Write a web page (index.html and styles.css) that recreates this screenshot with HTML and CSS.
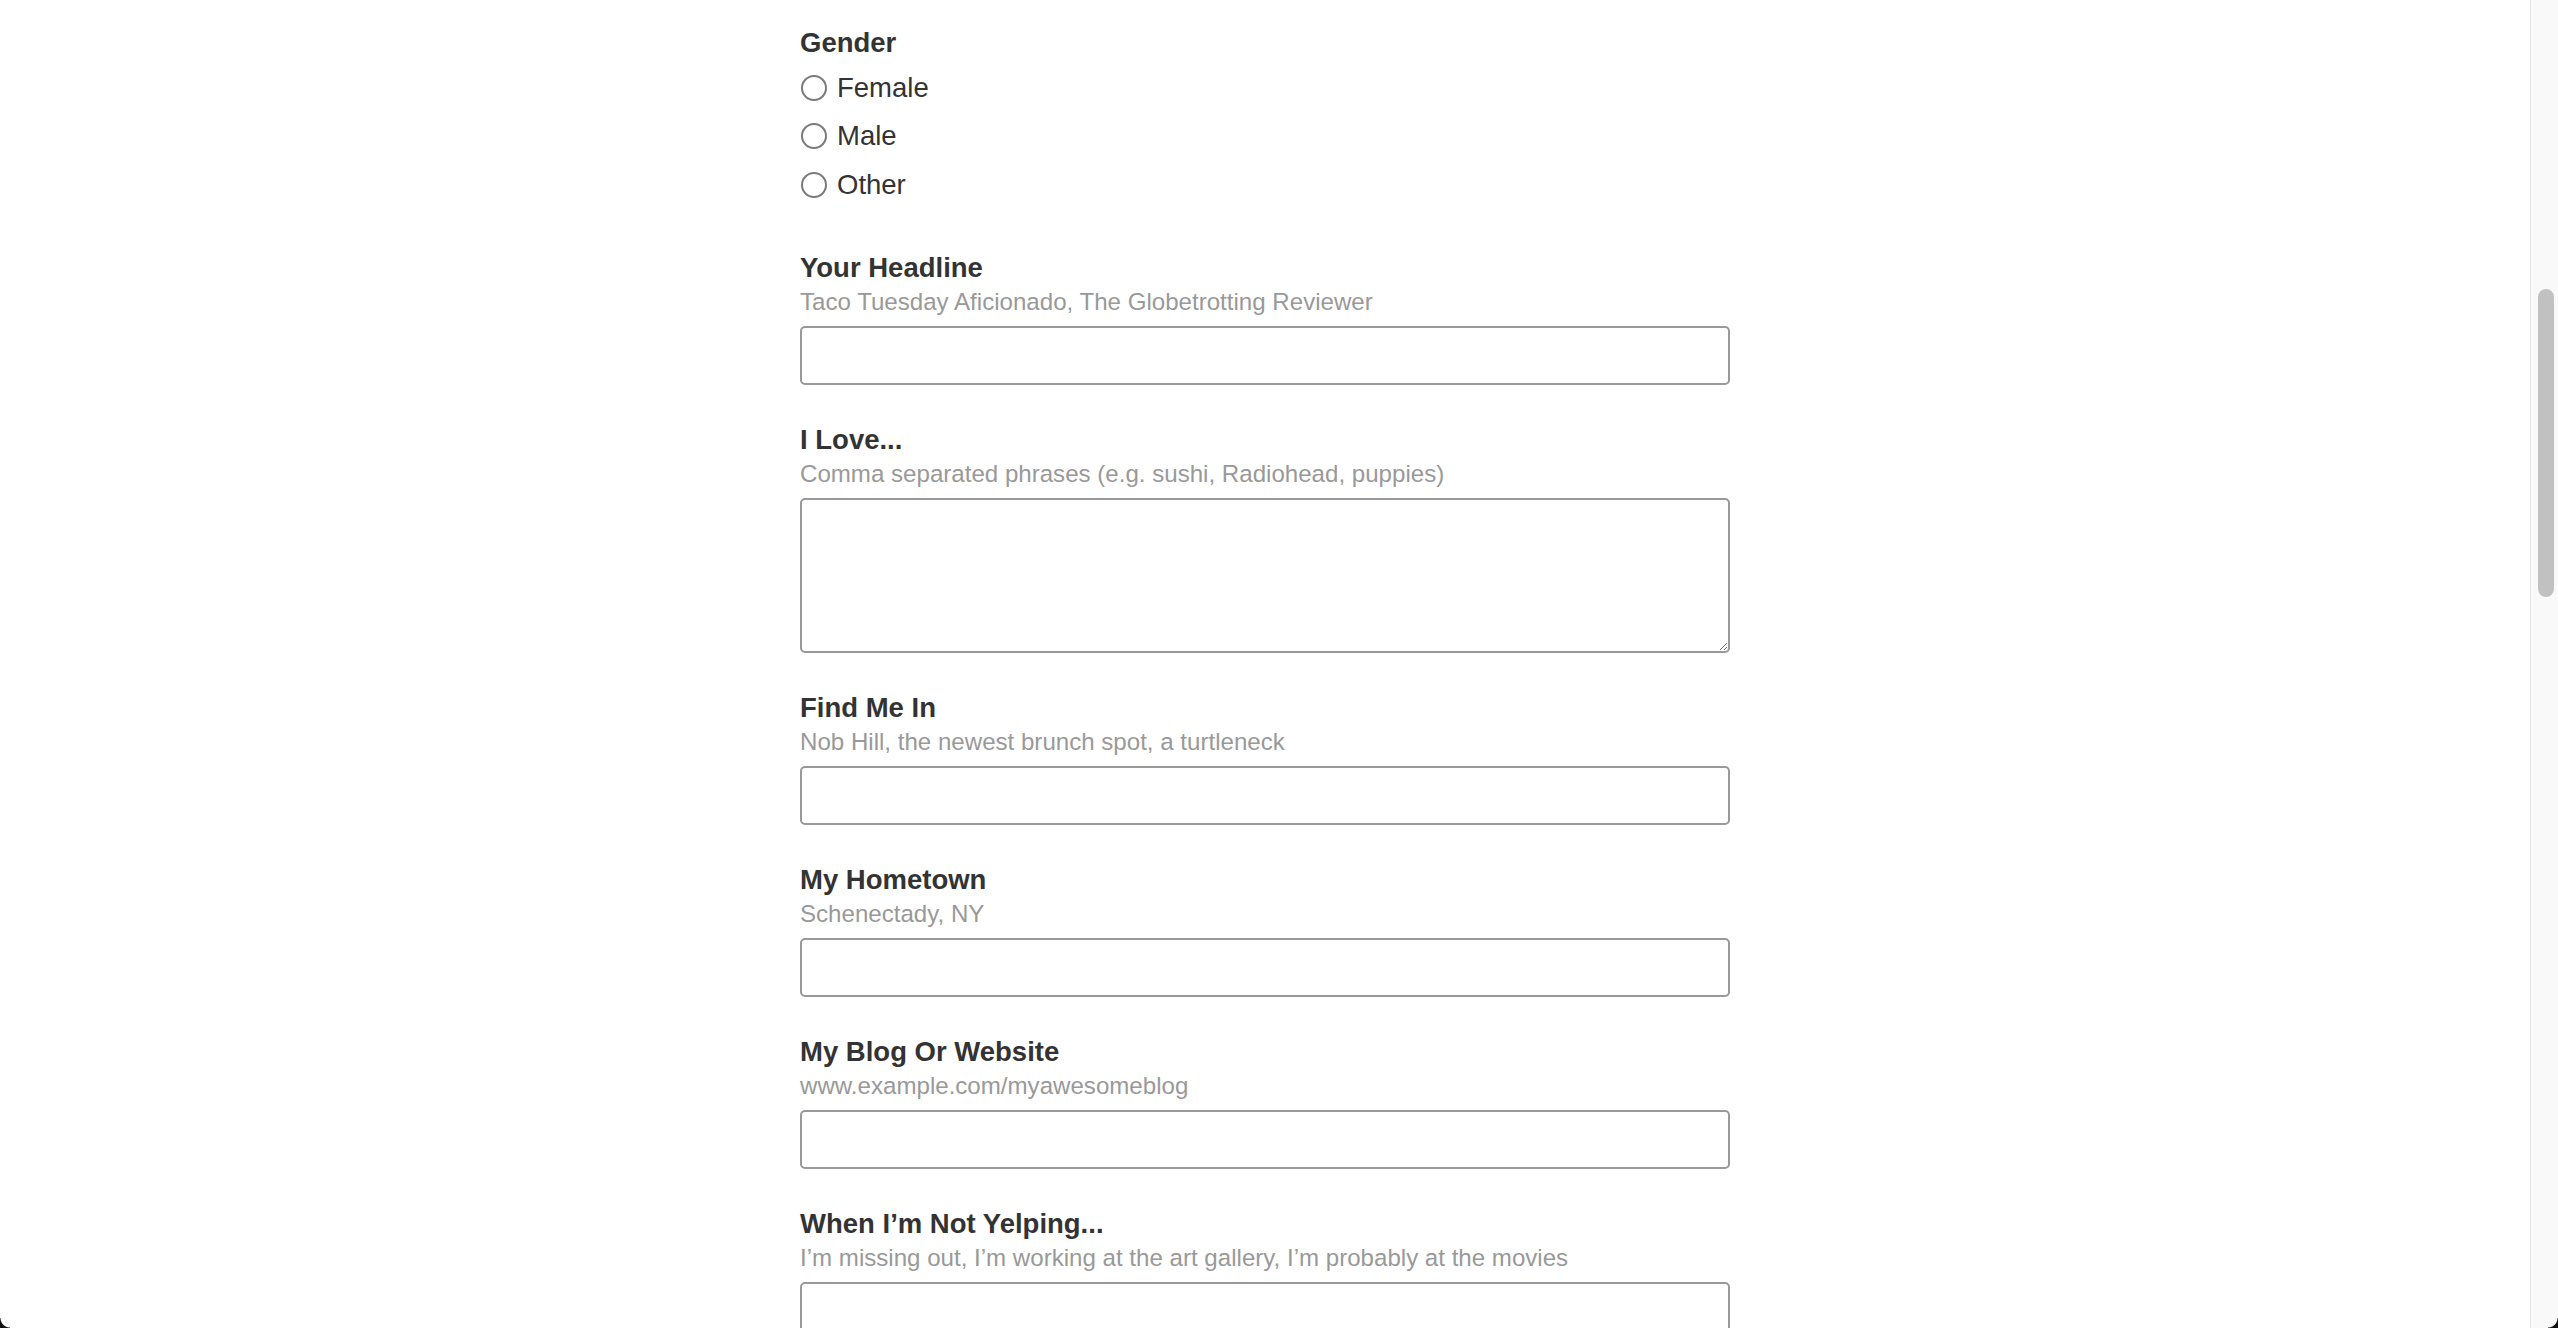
FILE: index.html
```html
<!DOCTYPE html>
<html lang="en">
<head>
<meta charset="utf-8">
<title>Profile</title>
<link rel="stylesheet" href="styles.css">
</head>
<body>
<div class="viewport">
  <main class="page">
    <form class="form">
      <fieldset class="field gender">
        <div class="label gender-label">Gender</div>
        <label class="radio-row"><input type="radio" name="gender" class="radio"><span>Female</span></label>
        <label class="radio-row"><input type="radio" name="gender" class="radio"><span>Male</span></label>
        <label class="radio-row"><input type="radio" name="gender" class="radio"><span>Other</span></label>
      </fieldset>

      <div class="field">
        <div class="label">Your Headline</div>
        <div class="hint">Taco Tuesday Aficionado, The Globetrotting Reviewer</div>
        <input class="text-input" type="text">
      </div>

      <div class="field">
        <div class="label">I Love...</div>
        <div class="hint">Comma separated phrases (e.g. sushi, Radiohead, puppies)</div>
        <textarea class="text-area"></textarea>
      </div>

      <div class="field">
        <div class="label">Find Me In</div>
        <div class="hint">Nob Hill, the newest brunch spot, a turtleneck</div>
        <input class="text-input" type="text">
      </div>

      <div class="field">
        <div class="label">My Hometown</div>
        <div class="hint">Schenectady, NY</div>
        <input class="text-input" type="text">
      </div>

      <div class="field">
        <div class="label">My Blog Or Website</div>
        <div class="hint">www.example.com/myawesomeblog</div>
        <input class="text-input" type="text">
      </div>

      <div class="field">
        <div class="label">When I’m Not Yelping...</div>
        <div class="hint">I’m missing out, I’m working at the art gallery, I’m probably at the movies</div>
        <input class="text-input" type="text">
      </div>
    </form>
  </main>
  <aside class="scrollbar"><div class="thumb"></div></aside>
</div>
<div class="corner corner-left"></div>
<div class="corner corner-right"></div>
</body>
</html>
```

FILE: styles.css
```css
html, body {
  margin: 0;
  padding: 0;
  height: 100%;
  overflow: hidden;
  background: #ffffff;
}

body {
  font-family: "Liberation Sans", Arial, Helvetica, sans-serif;
  color: #333333;
}

.viewport {
  display: flex;
  height: 100vh;
}

.page {
  flex: 1;
  overflow: hidden;
  display: flex;
  justify-content: center;
}

.form {
  width: 930px;
  padding-top: 25.5px;
}

.field {
  display: flex;
  flex-direction: column;
  margin: 0 0 38.2px 0;
  padding: 0;
  border: 0;
  min-width: 0;
}

.gender {
  margin-bottom: 41.5px;
}

.gender-label {
  margin-bottom: 4px;
}

.label {
  font-size: 27.5px;
  font-weight: bold;
  line-height: 34px;
  color: #333333;
}

.hint {
  font-size: 24.1px;
  line-height: 34px;
  color: #999999;
}

.radio-row {
  display: flex;
  align-items: center;
  height: 48.5px;
  font-size: 27.5px;
  color: #333333;
}

.radio {
  appearance: none;
  -webkit-appearance: none;
  width: 26px;
  height: 26px;
  margin: 0 10px 0 1px;
  border: 2px solid #7a7a7a;
  border-radius: 50%;
  background: #ffffff;
  box-sizing: border-box;
}

.text-input,
.text-area {
  box-sizing: border-box;
  width: 100%;
  margin: 7px 0 0 0;
  border: 2px solid #999999;
  border-radius: 5px;
  background: #ffffff;
  font: inherit;
  font-size: 24px;
  padding: 8px 12px;
}

.text-input {
  height: 59px;
}

.text-area {
  height: 155px;
  resize: vertical;
  display: block;
}

.scrollbar {
  width: 28px;
  flex: none;
  background: #f9f9f9;
  border-left: 1px solid #e6e6e6;
  padding: 289px 4px 0 7px;
  box-sizing: border-box;
}

.thumb {
  width: 16px;
  height: 308px;
  border-radius: 8px;
  background: #c1c1c1;
}

.corner {
  position: fixed;
  bottom: 0;
  width: 10px;
  height: 10px;
}

.corner-left {
  left: 0;
  background: radial-gradient(circle at 100% 0, transparent 9px, #111 10px);
}

.corner-right {
  right: 0;
  background: radial-gradient(circle at 0 0, transparent 9px, #111 10px);
}
```
